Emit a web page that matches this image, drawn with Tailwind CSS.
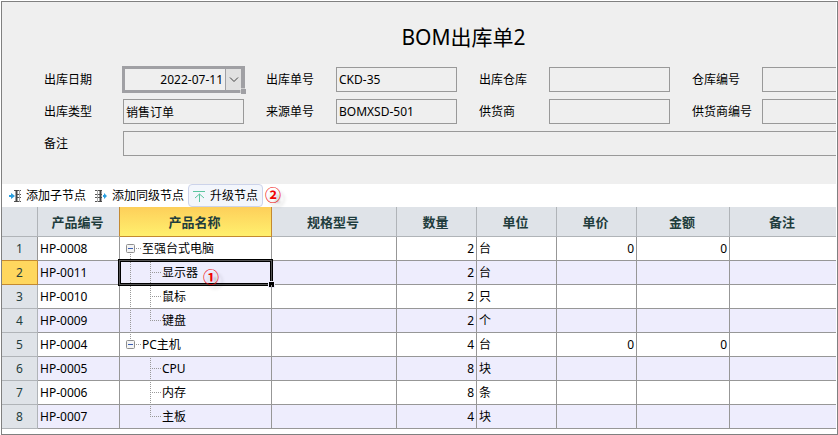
<!DOCTYPE html>
<html lang="zh-CN">
<head>
    <meta charset="UTF-8">
    <meta name="viewport" content="width=device-width, initial-scale=1.0">
    <title>BOM出库单2</title>
    <script src="https://cdn.jsdelivr.net/npm/@tailwindcss/browser@4"></script>
</head>
<body class="bg-white pt-px pl-px font-['Noto_Sans','Noto_Sans_CJK_SC',sans-serif] text-xs text-black">

    <div class="border border-[#808080] pr-px pb-[5px] overflow-hidden">

        <form class="bg-[#efefef] pl-[42px] pb-7 overflow-hidden">
            <div class="w-max">
                <h1 class="pt-5 pb-[15px] text-center text-[21px] leading-[30px]">BOM出库单2</h1>

                <div class="grid grid-cols-[79px_121px_92px_121px_92px_121px_92px_121px] gap-y-[7px] items-center">
                    <label for="out-date">出库日期</label>
                    <div class="relative -m-px h-[27px] border-3 border-[#a0a0a4] flex">
                        <input id="out-date" type="text" value="2022-07-11" class="min-w-0 flex-1 pr-0.5 text-right outline-none">
                        <button type="button" aria-label="选择日期" class="w-[17px] border border-[#a0a0a4] border-y-0 bg-[#e1e1e1] flex items-center justify-center">
                            <svg width="10" height="6" viewBox="0 0 10 6" fill="none" stroke="#404040"><path d="M1 .5l4 4 4-4"/></svg>
                        </button>
                        <span class="absolute -right-1 -bottom-1 size-[5px] bg-[#a0a0a4] outline outline-[#efefef]/60"></span>
                    </div>
                    <label for="out-no" class="pl-[22px]">出库单号</label>
                    <input id="out-no" type="text" value="CKD-35" class="h-[25px] border border-[#999] px-0.5">
                    <label for="store" class="pl-[22px]">出库仓库</label>
                    <input id="store" type="text" class="h-[25px] border border-[#999] px-0.5">
                    <label for="store-no" class="pl-[22px]">仓库编号</label>
                    <input id="store-no" type="text" class="h-[25px] border border-[#999] px-0.5">

                    <label for="out-type">出库类型</label>
                    <input id="out-type" type="text" value="销售订单" class="h-[25px] border border-[#999] px-0.5">
                    <label for="source-no" class="pl-[22px]">来源单号</label>
                    <input id="source-no" type="text" value="BOMXSD-501" class="h-[25px] border border-[#999] px-0.5">
                    <label for="supplier" class="pl-[22px]">供货商</label>
                    <input id="supplier" type="text" class="h-[25px] border border-[#999] px-0.5">
                    <label for="supplier-no" class="pl-[22px]">供货商编号</label>
                    <input id="supplier-no" type="text" class="h-[25px] border border-[#999] px-0.5">

                    <label for="remark">备注</label>
                    <input id="remark" type="text" class="col-span-7 h-[25px] border border-[#999] px-0.5">
                </div>
            </div>
        </form>

        <div class="flex h-[23px] pl-1.5 items-center">
            <button type="button" class="flex h-[23px] items-center gap-1 pr-2">
                <svg width="14" height="14" viewBox="0 0 14 14" fill="none">
                    <path d="M1 6h2V4l4 3-4 3V8H1z" fill="#2a9fe0"/>
                    <path d="M6 1.500h7M9 5.500h4M9 8.500h4M6 12.500h7" stroke="#555"/>
                    <path d="M8.500 1v12" stroke="#444" stroke-width="2"/>
                    <path d="M11.500 1v12" stroke="#aaa"/>
                </svg>
                添加子节点
            </button>
            <button type="button" class="flex h-[23px] items-center gap-1 pr-1">
                <svg width="14" height="14" viewBox="0 0 14 14" fill="none">
                    <path d="M1 1.500h7M1 5.500h7M1 8.500h7M1 12.500h7" stroke="#555"/>
                    <path d="M6.500 1v12" stroke="#444" stroke-width="2"/>
                    <path d="M3.500 1v12" stroke="#aaa"/>
                    <path d="M9 6h1V4l3 3-3 3V8H9z" fill="#2a9fe0"/>
                </svg>
                添加同级节点
            </button>
            <button type="button" class="flex h-[23px] items-center gap-1 rounded-sm border border-[#ccd3ea] bg-[#f3f6fc] pr-1 pl-[3px]">
                <svg width="14" height="14" viewBox="0 0 14 14" fill="none" stroke="#5cc5a0">
                    <path d="M1 2.500h12M7.500 5v8M3 9l4.500-4L12 9"/>
                </svg>
                升级节点
            </button>
            <span class="ml-0.5 pb-0.5 text-base leading-none font-bold text-[#f00000] text-shadow-[4px_4px_3px_rgb(0_0_0/0.250)]">②</span>
        </div>

        <table class="w-full table-fixed border-separate border-spacing-0">
            <colgroup>
                <col class="w-9">
                <col class="w-[82px]">
                <col class="w-[152px]">
                <col class="w-[125px]">
                <col class="w-20">
                <col class="w-20">
                <col class="w-20">
                <col class="w-[93px]">
                <col>
            </colgroup>
            <thead>
                <tr class="h-[30px] bg-[#dfe3e8] text-[13px] leading-5 text-[#1f3d3d] *:border-r *:border-b *:border-[#b0b4b8] *:p-0 *:pr-0.5 *:last:border-r-0">
                    <th></th>
                    <th class="border-r-[#c48a30]!">产品编号</th>
                    <th class="border-[#c48a30]! bg-linear-to-b from-[#fdcf5a] to-[#fff06e]">产品名称</th>
                    <th>规格型号</th>
                    <th>数量</th>
                    <th>单位</th>
                    <th>单价</th>
                    <th>金额</th>
                    <th>备注</th>
                </tr>
            </thead>
            <tbody id="bom-rows"></tbody>
        </table>

    </div>

    <script>
        const rows = [
            { code: 'HP-0008', name: '至强台式电脑', qty: 2, unit: '台', price: 0, amount: 0, tree: 'root-first' },
            { code: 'HP-0011', name: '显示器', qty: 2, unit: '台', tree: 'child-line', selected: true },
            { code: 'HP-0010', name: '鼠标', qty: 2, unit: '只', tree: 'child-line' },
            { code: 'HP-0009', name: '键盘', qty: 2, unit: '个', tree: 'child-line-last' },
            { code: 'HP-0004', name: 'PC主机', qty: 4, unit: '台', price: 0, amount: 0, tree: 'root-last' },
            { code: 'HP-0005', name: 'CPU', qty: 8, unit: '块', tree: 'child' },
            { code: 'HP-0006', name: '内存', qty: 8, unit: '条', tree: 'child' },
            { code: 'HP-0007', name: '主板', qty: 4, unit: '块', tree: 'child-last' }
        ];

        // dotted connectors and the collapse box, one svg per row
        const box = '<rect x="6.5" y="7.5" width="8" height="8" rx="1" fill="#f4f4f4" stroke="#8e8e8e" stroke-dasharray="none"/><path d="M8 11.500h5" stroke="#3b5fb5" stroke-dasharray="none"/>';
        const trees = {
            'root-first': '<path d="M16 11.500h6M10.500 17v6"/>' + box,
            'root-last': '<path d="M16 11.500h6M10.500 1v6"/>' + box,
            'child-line': '<path d="M10.500 1v22M30.500 1v22M32 11.500h9"/>',
            'child-line-last': '<path d="M10.500 1v22M30.500 1v11M32 11.500h9"/>',
            'child': '<path d="M30.500 1v22M32 11.500h9"/>',
            'child-last': '<path d="M30.500 1v11M32 11.500h9"/>'
        };

        const selection = `
            <span class="absolute -inset-0.5 border border-black shadow-[inset_0_0_0_1px_#555,inset_0_0_0_2px_#000]"></span>
            <span class="absolute -right-[3px] -bottom-[3px] size-[5px] bg-black outline outline-[#eeedfd]"></span>
            <span class="absolute top-2 left-[83px] text-base leading-none font-bold text-[#f00000] text-shadow-[4px_4px_3px_rgb(0_0_0/0.250)]">①</span>`;

        document.getElementById('bom-rows').innerHTML = rows.map((row, i) => {
            const root = row.tree.startsWith('root');
            const head = row.selected
                ? 'bg-[#ffd75e] border-[#c48a30]!'
                : rows[i + 1] && rows[i + 1].selected ? 'bg-[#dfe3e8] border-[#b0b4b8] border-b-[#c48a30]!' : 'bg-[#dfe3e8] border-[#b0b4b8]!';
            return `
            <tr class="h-6 leading-5 even:bg-[#eeedfd] *:border-r *:border-b *:border-[#979797] *:p-0 *:last:border-r-0">
                <th class="font-normal text-[#1f3d3d] ${head}">${i + 1}</th>
                <td><div class="pl-0.5">${row.code}</div></td>
                <td class="relative">
                    <div class="flex h-[23px] items-center">
                        <svg class="${root ? 'w-[22px]' : 'w-[42px]'} shrink-0" height="23" fill="none" stroke="#999" stroke-dasharray="1 1">${trees[row.tree]}</svg>
                        ${row.name}
                    </div>
                    ${row.selected ? selection : ''}
                </td>
                <td></td>
                <td class="text-right"><div class="pr-0.5">${row.qty}</div></td>
                <td><div class="pl-0.5">${row.unit}</div></td>
                <td class="text-right"><div class="pr-0.5">${row.price ?? ''}</div></td>
                <td class="text-right"><div class="pr-0.5">${row.amount ?? ''}</div></td>
                <td></td>
            </tr>`;
        }).join('');
    </script>
</body>
</html>
